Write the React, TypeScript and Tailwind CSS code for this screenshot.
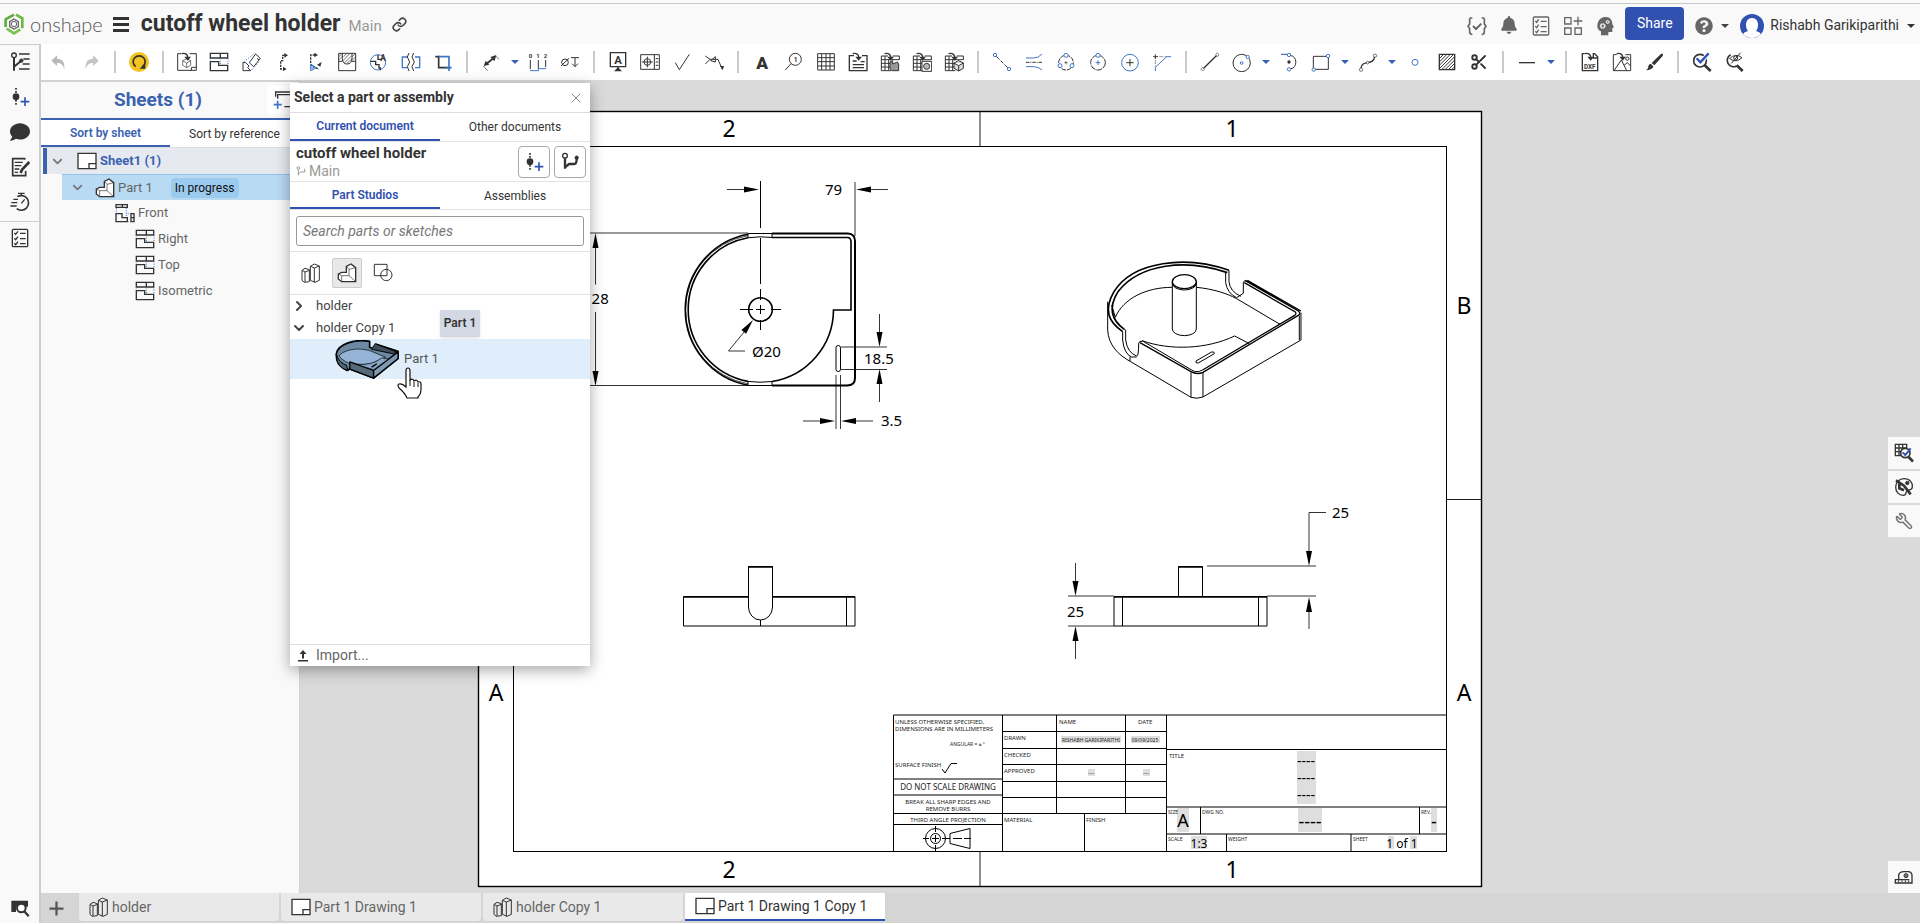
import type { ReactNode } from "react";
import { Scissors, Link, Wrench, ChevronDown, ChevronRight, X } from "lucide-react";
import { FaBell, FaComment, FaQuestionCircle } from "react-icons/fa";

/* 60 unit grid, drawn at 20px, so a stroke of 3 is one pixel */
function Glyph({ children, className = "size-5" }: { children: ReactNode; className?: string }) {
  return (
    <svg viewBox="0 0 60 60" className={className} fill="none" stroke="#333" strokeWidth="3" aria-hidden="true">
      {children}
    </svg>
  );
}

const BLUE = "#3f76c6";

/* ---------- shared glyphs ---------- */

const ViewGlyph = () => (
  <Glyph>
    <path d="M4 4H56V18H4ZM34 4V18M4 29H29V40H56V56H4Z" strokeWidth="4" />
    <path d="M4 19V28M34 19V36M57 19V38" stroke={BLUE} strokeDasharray="3 4" />
  </Glyph>
);

const FrontViewGlyph = () => (
  <Glyph>
    <path d="M3 5H37V13H3ZM22 5V13M3 32H21V44H37V56H3ZM48 32H57V56H48ZM48 44H57" strokeWidth="4" />
    <path d="M4 15V31M34 15V40M38 32H48M38 56H48" stroke={BLUE} strokeDasharray="3 4" />
  </Glyph>
);

const SheetGlyph = () => (
  <Glyph>
    <path d="M3 7H57V53H3ZM36 53V38H57" fill="#fff" strokeWidth="4" />
  </Glyph>
);

const PartGlyph = () => (
  <Glyph>
    <path d="M4 33L14 28H28V10L42 3L56 14V56H14L4 48Z" fill="#fff" strokeWidth="4" />
    <path d="M4 33L14 38H36V19L28 10M36 19L56 14M36 38L56 56M14 38V56" strokeWidth="2" />
  </Glyph>
);

const StudioGlyph = () => (
  <Glyph>
    <path d="M3 22L12 16L25 20V56L10 58L3 52ZM3 22L12 27V57M12 27L25 22" />
    <path d="M28 10L40 3L55 9V52L42 58L28 52ZM28 10L40 15V58M40 15L55 9" />
  </Glyph>
);

const VersionGlyph = () => (
  <Glyph>
    <path d="M18 3V56" strokeDasharray="5 4" strokeWidth="5" />
    <circle cx="18" cy="29" r="10" fill="#333" stroke="none" />
    <path d="M45 31V57M32 44H58" stroke="#2f52b3" strokeWidth="5" />
  </Glyph>
);

const BranchGlyph = () => (
  <Glyph>
    <circle cx="15" cy="11" r="7" strokeWidth="4" />
    <path d="M15 19V50M15 46L27 36H44Q50 34 50 20" strokeWidth="7" />
    <circle cx="50" cy="17" r="5" fill="#333" />
  </Glyph>
);

const InsertArrow = () => (
  <>
    <path d="M14 5C26 2 32 8 32 16" strokeWidth="4" />
    <path d="M22 14H42L32 26Z" fill="#333" stroke="none" />
  </>
);

const HalfGrid = () => <path d="M24 12H4V56H34M4 23H58M4 34H32M4 45H30M15 12V56M26 22V56M38 12H58V24" />;

/* ---------- toolbar ---------- */

type Tool = { label: string; icon: ReactNode; caret?: boolean };

const toolGroups: Tool[][] = [
  [
    {
      label: "Undo",
      icon: (
        <Glyph>
          <path d="M7 26L24 10V20C40 20 48 30 46 52C42 38 36 33 24 33V42Z" fill="#b9b9b9" stroke="none" />
        </Glyph>
      ),
    },
    {
      label: "Redo",
      icon: (
        <Glyph>
          <path d="M53 26L36 10V20C20 20 12 30 14 52C18 38 24 33 36 33V42Z" fill="#c4c4c4" stroke="none" />
        </Glyph>
      ),
    },
  ],
  [
    {
      label: "Update",
      icon: (
        <Glyph>
          <circle cx="30" cy="30" r="30" fill="#f4c321" stroke="none" />
          <path d="M20 44A18 18 0 1 1 41 44" strokeWidth="5" />
          <path d="M49 32V50H32Z" fill="#333" stroke="none" />
        </Glyph>
      ),
    },
  ],
  [
    {
      label: "Insert view",
      icon: (
        <Glyph>
          <path d="M13 5H2V55H58V5H38M43 55V46H58" />
          <path d="M29 20L41 26V40L29 47L17 40V26ZM17 26L29 33L41 26M29 33V47" strokeWidth="2" />
          <InsertArrow />
        </Glyph>
      ),
    },
    { label: "Projected view", icon: <ViewGlyph /> },
    {
      label: "Auxiliary view",
      icon: (
        <Glyph>
          <path d="M44 6L58 19L38 44L25 32ZM48 19L54 24M6 31V56H29L20 47L24 42L14 32Z" />
          <path d="M10 28L40 5M32 54L54 30" stroke={BLUE} strokeDasharray="3 4" />
        </Glyph>
      ),
    },
    {
      label: "Section line",
      icon: (
        <Glyph>
          <path d="M35 10H29V26H23V51H32" strokeDasharray="7 3" strokeWidth="4" />
          <path d="M34 3L45 10L34 17ZM30 44L41 51L30 58Z" fill="#333" stroke="none" />
        </Glyph>
      ),
    },
    {
      label: "Aligned section",
      icon: (
        <Glyph>
          <path d="M30 9H17V38L42 52" strokeDasharray="7 3" strokeWidth="4" />
          <path d="M28 2L39 9L28 16ZM50 30L46 44L36 38Z" fill="#333" stroke="none" />
          <path d="M17 36V56L34 48ZM21 40V52M26 43V50" stroke={BLUE} />
        </Glyph>
      ),
    },
    {
      label: "Broken-out section",
      icon: (
        <Glyph>
          <path d="M5 4H56V56H5ZM5 28H16M45 28H56M16 5V20Q17 36 30 36Q44 36 45 20V5" />
          <path d="M5 14L15 5M5 24L16 13M20 14L28 5M18 26L38 5M22 33L44 11M30 34L45 20M46 14L55 5M46 25L56 14" strokeWidth="2" />
        </Glyph>
      ),
    },
    {
      label: "Detail view",
      icon: (
        <Glyph>
          <circle cx="27" cy="31" r="23" stroke={BLUE} />
          <path d="M4 28H20V38H30V48H34V55M27 9V22H36" strokeWidth="4" />
          <text x="34" y="26" fontSize="25" fontWeight="700" fill="#333" stroke="none" fontFamily="Roboto">A</text>
        </Glyph>
      ),
    },
    {
      label: "Break view",
      icon: (
        <Glyph>
          <path d="M18 15H4V47H18M42 15H56V47H42" stroke={BLUE} strokeWidth="4" />
          <path d="M24 3L19 15L26 30L19 44L24 57M38 3L33 15L40 30L33 44L38 57" />
        </Glyph>
      ),
    },
    {
      label: "Crop view",
      icon: (
        <Glyph>
          <path d="M7 14H20M17 12V47H52" strokeWidth="5" />
          <path d="M17 14H48V57M38 47H56" stroke={BLUE} strokeWidth="5" />
        </Glyph>
      ),
    },
  ],
  [
    {
      label: "Dimension",
      caret: true,
      icon: (
        <Glyph>
          <path d="M16 36L38 18" strokeWidth="5" />
          <path d="M8 42L14 26L25 38ZM46 10L40 28L28 15Z" fill="#333" stroke="none" />
          <path d="M7 42L20 56M40 8L54 22" strokeWidth="2" />
        </Glyph>
      ),
    },
    {
      label: "Ordinate dimension",
      icon: (
        <Glyph>
          <text x="2" y="17" fontSize="18" fontWeight="700" fill="#333" stroke="none" fontFamily="Roboto">0</text>
          <text x="25" y="17" fontSize="18" fontWeight="700" fill="#333" stroke="none" fontFamily="Roboto">1</text>
          <text x="47" y="17" fontSize="18" fontWeight="700" fill="#333" stroke="none" fontFamily="Roboto">2</text>
          <path d="M7 24V51M31 24V50M53 24V45" />
          <path d="M6 56H31V50H55" stroke={BLUE} />
        </Glyph>
      ),
    },
    {
      label: "Hole callout",
      icon: (
        <Glyph>
          <circle cx="15" cy="31" r="10" />
          <path d="M3 42L27 19M33 17H57M45 17V44M36 35L45 44L54 35" />
        </Glyph>
      ),
    },
  ],
  [
    {
      label: "Note",
      icon: (
        <Glyph>
          <path d="M7 2H53V44H7ZM30 44V54" strokeWidth="4" />
          <path d="M30 46L42 58H18Z" fill="#333" stroke="none" />
          <text x="19" y="36" fontSize="34" fontWeight="700" fill="#333" stroke="none" fontFamily="Roboto">A</text>
        </Glyph>
      ),
    },
    {
      label: "Geometric tolerance",
      icon: (
        <Glyph>
          <path d="M2 8H58V52H2ZM43 8V52M6 30H38M22 14V46M47 20H55M47 30H55M47 40H55" />
          <circle cx="22" cy="30" r="10" />
        </Glyph>
      ),
    },
    {
      label: "Surface finish",
      icon: (
        <Glyph>
          <path d="M10 32L22 53L52 7" />
        </Glyph>
      ),
    },
    {
      label: "Weld symbol",
      icon: (
        <Glyph>
          <path d="M4 12L18 22H42L54 50M4 36L18 22M20 26L34 14V30Z" />
          <path d="M48 42L60 42L56 55Z" fill="#333" stroke="none" />
        </Glyph>
      ),
    },
  ],
  [
    {
      label: "Text",
      icon: (
        <Glyph>
          <text x="13" y="50" fontSize="52" fontWeight="900" fill="#333" stroke="none" fontFamily="Roboto">A</text>
        </Glyph>
      ),
    },
    {
      label: "Callout",
      icon: (
        <Glyph>
          <circle cx="34" cy="22" r="18" />
          <path d="M21 35L4 54" />
          <text x="29" y="29" fontSize="20" fontWeight="700" fill="#333" stroke="none" fontFamily="Roboto">1</text>
        </Glyph>
      ),
    },
    {
      label: "Table",
      icon: (
        <Glyph>
          <path d="M5 5H55V54H5ZM5 17H55M5 29H55M5 42H55M17 5V54M30 5V54M42 5V54" />
        </Glyph>
      ),
    },
    {
      label: "Insert BOM",
      icon: (
        <Glyph>
          <path d="M18 11H4V56H57V11H42" strokeWidth="4" />
          <path d="M14 27H26M14 38H48M14 47H48M38 29H50" strokeWidth="4" />
          <InsertArrow />
        </Glyph>
      ),
    },
    {
      label: "Hole table",
      icon: (
        <Glyph>
          <HalfGrid />
          <path d="M30 30L38 26V36L52 30L56 36V56H36L30 50Z" fill="#999" />
          <InsertArrow />
        </Glyph>
      ),
    },
    {
      label: "Revision table",
      icon: (
        <Glyph>
          <HalfGrid />
          <path d="M30 28H59V58H30Z" fill="#fff" />
          <circle cx="44" cy="43" r="9" fill="#bbb" />
          <InsertArrow />
        </Glyph>
      ),
    },
    {
      label: "Cut list table",
      icon: (
        <Glyph>
          <HalfGrid />
          <path d="M44 26L58 33V49L44 57L30 49V33ZM30 33L44 41L58 33M44 41V57" fill="#ddd" />
          <InsertArrow />
        </Glyph>
      ),
    },
  ],
  [
    {
      label: "Centerline",
      icon: (
        <Glyph>
          <path d="M13 13L47 47" strokeDasharray="10 3 3 3" />
          <circle cx="9" cy="9" r="5" stroke={BLUE} />
          <circle cx="51" cy="51" r="5" stroke={BLUE} />
        </Glyph>
      ),
    },
    {
      label: "Edge centerline",
      icon: (
        <Glyph>
          <path d="M6 31H54" strokeDasharray="10 3 3 3" />
          <path d="M6 18H28Q44 18 54 6M6 44H28Q44 44 54 54" stroke={BLUE} />
        </Glyph>
      ),
    },
    {
      label: "Bolt circle",
      icon: (
        <Glyph>
          <circle cx="30" cy="32" r="22" strokeDasharray="14 3" />
          <path d="M25 32H35M30 27V37" strokeWidth="2" />
          <g stroke={BLUE} fill="#fff">
            <circle cx="30" cy="10" r="6" />
            <circle cx="12" cy="41" r="6" />
            <circle cx="48" cy="41" r="6" />
          </g>
        </Glyph>
      ),
    },
    {
      label: "Centermark circle",
      icon: (
        <Glyph>
          <circle cx="30" cy="32" r="22" strokeDasharray="18 3" />
          <circle cx="30" cy="10" r="6" stroke={BLUE} fill="#fff" />
          <path d="M23 32H37M30 25V39" stroke={BLUE} />
        </Glyph>
      ),
    },
    {
      label: "Centermark",
      icon: (
        <Glyph>
          <circle cx="30" cy="32" r="25" stroke={BLUE} />
          <path d="M19 32H41M30 21V43" />
        </Glyph>
      ),
    },
    {
      label: "Virtual sharp",
      icon: (
        <Glyph>
          <path d="M4 14H18M10 7V21" />
          <path d="M22 14H44M10 24V44" stroke="#999" strokeDasharray="12 4" />
          <path d="M10 57V46L44 14H57" stroke={BLUE} />
        </Glyph>
      ),
    },
  ],
  [
    {
      label: "Line",
      icon: (
        <Glyph>
          <path d="M11 49L49 11" strokeWidth="4" />
          <path d="M8 46L13 52L8 57L3 52ZM52 3L57 8L52 14L47 8Z" fill="#fff" strokeWidth="2" />
        </Glyph>
      ),
    },
    {
      label: "Circle",
      caret: true,
      icon: (
        <Glyph>
          <circle cx="29" cy="33" r="26" />
          <circle cx="29" cy="33" r="4" stroke={BLUE} />
          <circle cx="47" cy="15" r="5" stroke={BLUE} fill="#fff" />
        </Glyph>
      ),
    },
    {
      label: "Arc",
      icon: (
        <Glyph>
          <path d="M34 10A21 21 0 0 1 34 51" />
          <path d="M6 7H26" stroke="#2f52b3" />
          <circle cx="30" cy="30" r="5" fill="#333" stroke="none" />
          <circle cx="30" cy="9" r="5" stroke={BLUE} fill="#fff" />
          <circle cx="30" cy="52" r="5" stroke={BLUE} fill="#fff" />
        </Glyph>
      ),
    },
    {
      label: "Rectangle",
      caret: true,
      icon: (
        <Glyph>
          <path d="M7 13H52V52H7Z" />
          <circle cx="51" cy="12" r="5" stroke={BLUE} fill="#fff" />
          <circle cx="8" cy="53" r="5" stroke={BLUE} fill="#fff" />
        </Glyph>
      ),
    },
    {
      label: "Spline",
      caret: true,
      icon: (
        <Glyph>
          <path d="M9 50C10 34 20 34 28 32C40 30 48 28 50 14" strokeWidth="4" />
          <g fill="#fff" strokeWidth="2">
            <circle cx="9" cy="53" r="5" />
            <circle cx="29" cy="32" r="4" />
            <circle cx="51" cy="11" r="5" />
          </g>
        </Glyph>
      ),
    },
    {
      label: "Point",
      icon: (
        <Glyph>
          <circle cx="30" cy="31" r="9" stroke="#4a72d0" />
        </Glyph>
      ),
    },
    {
      label: "Hatch",
      icon: (
        <Glyph>
          <path d="M7 7H53V53H7Z" strokeWidth="4" />
          <path d="M7 20L20 7M7 30L30 7M7 40L40 7M7 50L50 7M14 53L53 14M24 53L53 24M34 53L53 34M44 53L53 44" />
        </Glyph>
      ),
    },
    { label: "Trim", icon: <Scissors className="size-[18px] text-[#333]" strokeWidth={2.5} /> },
  ],
  [
    {
      label: "Line style",
      caret: true,
      icon: (
        <Glyph>
          <path d="M6 32H54" strokeWidth="4" />
        </Glyph>
      ),
    },
  ],
  [
    {
      label: "Insert DXF",
      icon: (
        <Glyph>
          <path d="M14 5H7V56H53V14L44 5H38M40 5V18H53" strokeWidth="4" />
          <text x="12" y="51" fontSize="19" fontWeight="700" fill="#333" stroke="none" fontFamily="Roboto">DXF</text>
          <InsertArrow />
        </Glyph>
      ),
    },
    {
      label: "Insert image",
      icon: (
        <Glyph>
          <path d="M14 8H4V56H56V8H40M6 56L28 24L44 56M36 40L46 32L56 42" />
          <circle cx="46" cy="20" r="5" />
          <InsertArrow />
        </Glyph>
      ),
    },
    {
      label: "Format painter",
      icon: (
        <Glyph>
          <path d="M55 5Q59 7 56 12L31 40L23 33L50 7Q53 4 55 5ZM20 35L28 43Q26 54 5 55Q14 50 13 42Q15 36 20 35Z" fill="#333" stroke="none" />
        </Glyph>
      ),
    },
  ],
  [
    {
      label: "Show dimensions",
      icon: (
        <Glyph>
          <circle cx="24" cy="26" r="19" strokeWidth="5" />
          <path d="M38 40L56 57" strokeWidth="8" />
          <path d="M14 20L25 32L50 4" stroke="#fff" strokeWidth="13" />
          <path d="M14 19L25 31L50 4" stroke="#2f52b3" strokeWidth="7" />
        </Glyph>
      ),
    },
    {
      label: "Hide dangling",
      icon: (
        <Glyph>
          <path d="M38 42A19 19 0 1 1 20 8" strokeWidth="5" />
          <path d="M38 40L56 57" strokeWidth="8" />
          <path d="M17 20Q34 2 54 17Q36 34 17 20ZM22 34L50 2" />
          <circle cx="35" cy="18" r="6" />
        </Glyph>
      ),
    },
  ],
];

function Caret({ className }: { className: string }) {
  return (
    <svg viewBox="0 0 8 4" className={className} aria-hidden="true">
      <path d="M0 0H8L4 4Z" fill="currentColor" />
    </svg>
  );
}

function Toolbar() {
  return (
    <div className="flex h-9 items-center bg-white pl-[2px]">
      {toolGroups.map((group, i) => (
        <div key={i} className="flex items-center">
          {i > 0 && <div className="mx-[7px] h-[22px] w-[2px] bg-[#cacaca]" />}
          {group.map((tool) => (
            <div key={tool.label} className="flex">
              <button type="button" aria-label={tool.label} className="flex h-8 w-8 items-center justify-center">
                {tool.icon}
              </button>
              {tool.caret && (
                <button type="button" aria-label={tool.label + " options"} className="flex w-[15px] items-center justify-center">
                  <Caret className="h-1 w-2 text-[#3661b5]" />
                </button>
              )}
            </div>
          ))}
        </div>
      ))}
    </div>
  );
}

/* ---------- header ---------- */

function Header() {
  return (
    <header className="flex h-[41px] shrink-0 items-center justify-between border-t border-[#c8c9cc] bg-[#f9f9f9] pr-[5px] pl-1">
      <div className="flex items-center">
        <svg viewBox="0 0 60 66" className="h-[22px] w-5" fill="none" aria-hidden="true">
          <path d="M36 5L55 16V46" stroke="#6cbb45" strokeWidth="8" />
          <path d="M49 49L30 61L8 47" stroke="#7ac24f" strokeWidth="8" />
          <path d="M5 42V19L30 5" stroke="#5fae3c" strokeWidth="8" />
          <path d="M30 18L43 26V41L30 48L17 41V26Z" stroke="#666" strokeWidth="4" />
          <circle cx="30" cy="33" r="8" stroke="#666" strokeWidth="3" />
        </svg>
        <span className="ml-[6px] font-[Lato] text-[20px] leading-6 font-light text-[#555]">onshape</span>
        <button type="button" aria-label="Menu" className="ml-[10px] flex w-4 flex-col gap-[3px]">
          <span className="h-[3px] bg-[#333]" />
          <span className="h-[3px] bg-[#333]" />
          <span className="h-[3px] bg-[#333]" />
        </button>
        <h1 className="ml-3 text-[23px] leading-6 font-bold text-[#333]">cutoff wheel holder</h1>
        <span className="ml-2 pt-1 text-[15px] leading-5 text-[#999]">Main</span>
        <button type="button" aria-label="Copy link" className="ml-[10px]">
          <Link className="size-[15px] text-[#444]" strokeWidth={2.5} />
        </button>
      </div>

      <div className="flex items-center pt-[3px] text-[#666]">
        <div className="flex gap-3 pr-[10px]">
          <button type="button" aria-label="Tasks">
            <Glyph>
              <path d="M16 6H11Q8 6 8 12V24L3 31L8 38V48Q8 55 16 55M44 6H49Q52 6 52 12V24L57 31L52 38V48Q52 55 44 55" stroke="#666" strokeWidth="5" />
              <path d="M18 30L27 39L43 23" stroke="#666" strokeWidth="6" />
            </Glyph>
          </button>
          <button type="button" aria-label="Notifications" className="flex w-5 justify-center">
            <FaBell className="size-[18px]" />
          </button>
          <button type="button" aria-label="Checklist">
            <Glyph>
              <rect x="7" y="3" width="46" height="54" rx="3" stroke="#666" strokeWidth="4" />
              <path d="M13 15L17 19L23 10M13 31L17 35L23 26M13 46L17 50L23 41M29 16H47M29 32H47M29 47H47" stroke="#666" strokeWidth="4" />
            </Glyph>
          </button>
          <button type="button" aria-label="App store">
            <Glyph>
              <path d="M5 5H24V24H5ZM5 36H24V55H5ZM36 36H55V55H36ZM45 2V28M32 15H58" stroke="#666" strokeWidth="4" />
            </Glyph>
          </button>
          <button type="button" aria-label="Learning">
            <Glyph>
              <path d="M18 58V46C6 42 6 30 8 22C12 8 22 3 32 3C46 3 52 14 52 24L57 34L52 36V48H40V58Z" fill="#666" stroke="none" />
              <circle cx="23" cy="30" r="6" stroke="#f9f9f9" strokeDasharray="4 1" strokeWidth="5" />
              <circle cx="38" cy="18" r="4" stroke="#f9f9f9" strokeDasharray="3 1" strokeWidth="4" />
            </Glyph>
          </button>
        </div>
        <button type="button" className="mb-1 h-[33px] w-[59px] rounded bg-[#3151b0] text-[14px] text-white">
          Share
        </button>
        <button type="button" aria-label="Help" className="ml-[11px] flex items-center gap-2">
          <FaQuestionCircle className="size-[18px]" />
          <Caret className="h-1 w-2 text-[#444]" />
        </button>
        <button type="button" className="ml-[11px] flex items-center gap-[6px] text-[14px] text-[#333]">
          <svg viewBox="0 0 24 24" className="size-6" aria-hidden="true">
            <circle cx="12" cy="12" r="12" fill="#3151b0" />
            <path d="M12 4C16 4 18 7 18 11C18 14 17 16 16 17Q20 18 21 20Q17 24 12 24Q7 24 3 20Q4 18 8 17C7 16 6 14 6 11C6 7 8 4 12 4Z" fill="#fff" />
          </svg>
          Rishabh Garikiparithi
          <Caret className="ml-[2px] h-1 w-2" />
        </button>
      </div>
    </header>
  );
}

/* ---------- left rail ---------- */

function Rail() {
  return (
    <nav className="flex w-[41px] shrink-0 flex-col items-center border-t border-r-2 border-[#ccc] bg-[#f9f9f9] pt-[7px] pb-[5px]">
      <div className="flex flex-col gap-[15px]">
        <button type="button" aria-label="Feature tree">
          <Glyph>
            <circle cx="12" cy="10" r="7" strokeWidth="4" />
            <path d="M12 17V56M12 44L32 28" strokeWidth="6" />
            <circle cx="34" cy="26" r="5" fill="#333" />
            <path d="M27 6H59M40 21H59M38 36H59M27 51H59" strokeWidth="5" />
          </Glyph>
        </button>
        <button type="button" aria-label="Versions">
          <VersionGlyph />
        </button>
        <button type="button" aria-label="Comments">
          <FaComment className="size-5 text-[#333]" />
        </button>
        <button type="button" aria-label="Notes">
          <Glyph>
            <path d="M44 8V5H8V56H47V42" strokeWidth="5" />
            <path d="M14 16H38M14 26H34M14 36H28M14 46H24" strokeWidth="4" />
            <path d="M58 15L36 38L32 48" strokeWidth="8" />
          </Glyph>
        </button>
        <button type="button" aria-label="History">
          <Glyph>
            <path d="M22 14A22 22 0 1 1 20 50" strokeWidth="5" />
            <path d="M24 4H44M34 4V12M34 34L44 22M10 22H24M4 32H22M1 42H20" strokeWidth="4" />
          </Glyph>
        </button>
      </div>
      <div className="mt-[9px] mb-[6px] h-px w-full bg-[#ccc]" />
      <button type="button" aria-label="Tasks panel">
        <Glyph>
          <rect x="7" y="4" width="46" height="52" rx="3" strokeWidth="4" />
          <path d="M13 15L17 19L24 10M13 31L17 35L24 26M13 46L17 50L24 41M30 16H47M30 32H47M30 47H47" strokeWidth="4" />
        </Glyph>
      </button>
      <button type="button" aria-label="Search tabs" className="mt-auto">
        <Glyph>
          <path d="M4 8H54V26H4ZM4 26H18V42H4Z" fill="#333" stroke="none" />
          <circle cx="34" cy="30" r="13" fill="#fff" strokeWidth="6" />
          <path d="M43 40L56 55" strokeWidth="7" />
        </Glyph>
      </button>
    </nav>
  );
}

/* ---------- sheets panel ---------- */

function SheetsPanel() {
  return (
    <aside className="flex w-[259px] shrink-0 flex-col border-t-2 border-r border-[#d2d2d2] bg-[#f9f9f9] text-[13px] text-[#666]">
      <div className="flex h-[38px] items-center justify-between border-b-2 border-[#3a62b0] pl-[73px]">
        <h2 className="text-[19px] font-bold text-[#3a62b0]">Sheets (1)</h2>
        <button type="button" aria-label="Add sheet" className="flex h-7 w-8 items-center rounded bg-white pl-[6px]">
          <Glyph>
            <path d="M8 20V6H60M14 26V14H60V50H34" strokeWidth="4" />
            <path d="M14 32V56M2 44H26" stroke={BLUE} strokeWidth="5" />
          </Glyph>
        </button>
      </div>
      <div className="flex border-b border-[#ddd] bg-white text-[12px] text-[#333]">
        <button type="button" className="h-[27px] w-[129px] border-b-2 border-[#3a62b0] font-semibold text-[#3a62b0]">
          Sort by sheet
        </button>
        <button type="button" className="h-[27px] flex-1">
          Sort by reference
        </button>
      </div>
      <ul className="pl-[2px] leading-[26px]">
        <li className="flex h-[26px] items-center border-l-4 border-[#3a62b0] bg-[#e6eaf0] font-bold text-[#3a62b0]">
          <ChevronDown className="mr-[12px] ml-[3px] size-[15px] text-[#777]" strokeWidth={3} />
          <SheetGlyph />
          <span className="ml-[3px]">Sheet1 (1)</span>
        </li>
        <li className="ml-[19px] flex h-[26px] items-center border-t border-[#92c3ea] bg-[#b8daf3]">
          <ChevronDown className="mr-[10px] ml-2 size-[15px] text-[#777]" strokeWidth={3} />
          <PartGlyph />
          <span className="ml-[3px]">Part 1</span>
          <span className="ml-[18px] h-5 rounded bg-[#9ccbf0] px-1 text-[12px] leading-5 text-[#111]">In progress</span>
        </li>
        <li className="flex h-[26px] items-center gap-[3px] pl-[72px]">
          <FrontViewGlyph />
          Front
        </li>
        {["Right", "Top", "Isometric"].map((name) => (
          <li key={name} className="flex h-[26px] items-center gap-[3px] pl-[92px]">
            <ViewGlyph />
            {name}
          </li>
        ))}
      </ul>
    </aside>
  );
}

/* ---------- drawing sheet ---------- */

/* tip at x,y; angle 0 points right */
function Arrow({ x, y, angle }: { x: number; y: number; angle: number }) {
  return <path d="M0 0L-15 3V-3Z" transform={`translate(${x} ${y}) rotate(${angle})`} fill="#000" stroke="none" />;
}

function TopView() {
  return (
    <g>
      {/* wall */}
      <g strokeWidth="1.6">
        <path d="M748 234.2A76.8 76.8 0 0 0 748 385.2M748 237.8A73 73 0 0 0 748 381.4" />
        <path d="M772 233.5H848Q855 234 855 241V378Q855 385.5 847 385.5H772" strokeWidth="2" />
        <path d="M772 237.5H848Q851 238 851 242V310H833.5A73 73 0 0 1 772 381.5" />
      </g>
      <path d="M748 235.6A75.2 75.2 0 0 0 748 383.8" strokeWidth=".7" />
      <path d="M748 233.5H772V237.5Q760 236 748 237.8ZM748 385.5H772V381.5Q760 383 748 381.4Z" fill="#fff" />
      <circle cx="760.5" cy="309.5" r="11.8" strokeWidth="1.6" />
      <rect x="836" y="345.5" width="4.5" height="26" rx="2.2" />
      {/* center mark */}
      <path d="M760.5 181V228M760.5 238V284M760.5 289V300M760.5 305V314M760.5 320V330M740 309.5H753M756 309.5H765M771 309.5H781" />
      {/* dimensions */}
      <g strokeWidth=".8">
        <path d="M855 182V236M727 189.5H750M865 189.5H888" />
        <path d="M480 233H748M480 385.5H748M595.5 240V284.5M595.5 312V380" />
        <path d="M749 326L728.5 351H745" />
        <path d="M841 347H887M841 369.5H887M879.5 314V340M879.5 376V402" />
        <path d="M836 375V429M840.5 375V429M803 421H828M848 421H873" />
      </g>
      <Arrow x={759} y={189.5} angle={0} />
      <Arrow x={856} y={189.5} angle={180} />
      <Arrow x={595.5} y={233} angle={-90} />
      <Arrow x={595.5} y={386} angle={90} />
      <Arrow x={753} y={320} angle={-52} />
      <Arrow x={879.5} y={347} angle={90} />
      <Arrow x={879.5} y={369} angle={-90} />
      <Arrow x={835} y={421} angle={0} />
      <Arrow x={841} y={421} angle={180} />
      <g fill="#000" stroke="none" fontSize="15">
        <text x="825" y="195">79</text>
        <text x="583" y="304">128</text>
        <text x="752" y="357">Ø20</text>
        <text x="864" y="364">18.5</text>
        <text x="881" y="426">3.5</text>
      </g>
    </g>
  );
}

function IsoView() {
  return (
    <g transform="translate(1040 230) scale(.3333)" strokeWidth="3">
      {/* round wall rim */}
      <path d="M567 121C440 76 280 92 222 185C190 240 205 275 248 305M562 128C440 86 300 100 234 185C200 240 220 275 254 299" strokeWidth="5" />
      <path d="M203 215V300C205 345 235 375 272 395L453 502Q471 508 489 501L783 330V248" />
      <path d="M567 121V155Q570 185 603 199M557 127V158Q562 190 590 203L610 190V158Q612 150 620 152" />
      <path d="M248 305V330Q252 370 274 381M257 299V330Q262 368 290 378Q296 380 296 340Q298 332 306 334M270 380V394M274 381H290" />
      {/* straight rim */}
      <path d="M616 152L775 243Q784 250 775 256L489 427Q471 435 453 425L300 338M622 151L783 243M613 158L766 246Q770 252 764 256L488 420" strokeWidth="4" />
      <path d="M306 332L455 420Q470 430 488 420" />
      <path d="M453 427V502M489 427V501M778 257V330" />
      {/* floor */}
      <path d="M226 262C250 205 320 172 396 172M469 172C520 177 560 190 590 206L720 283" />
      <path d="M306 332C390 362 500 358 584 318L628 341M215 225L226 262" />
      <path d="M468 393L515 366Q524 364 523 371L475 399Q466 401 468 393Z" />
      {/* pin */}
      <path d="M397 155V297A36 20 0 0 0 469 297V155" fill="#fff" />
      <ellipse cx="433" cy="155" rx="36" ry="21" fill="#fff" strokeWidth="4" />
      <path d="M397 160A36 20 0 0 0 469 160" />
    </g>
  );
}

function SideViews() {
  return (
    <g>
      <path d="M683.5 596.5H855V626H683.5ZM846.5 597V626M760.5 619V626" />
      <path d="M748.5 566.5H772.5V607A12 13 0 0 1 748.5 607Z" fill="#fff" />
      <path d="M748 567H773M684 597H748M773 597H855" strokeWidth="1.6" />

      <path d="M1114 596.5H1267V626H1114ZM1122.5 597V626M1258.5 597V626M1178.5 596V566.5H1202.5V596" />
      <path d="M1178 567H1203M1114 597H1267" strokeWidth="1.6" />
      <g strokeWidth=".8">
        <path d="M1068 596H1114M1068 626H1114M1075.5 563V590M1075.5 632V659" />
        <path d="M1207 566H1316M1267 596H1316M1309 560V512.5H1326M1309 602V629" />
      </g>
      <Arrow x={1075.5} y={596} angle={90} />
      <Arrow x={1075.5} y={626} angle={-90} />
      <Arrow x={1309} y={566} angle={90} />
      <Arrow x={1309} y={597} angle={-90} />
      <g fill="#000" stroke="none" fontSize="15">
        <text x="1067" y="617">25</text>
        <text x="1332" y="518">25</text>
      </g>
    </g>
  );
}

function TitleBlock() {
  return (
    <g>
      <path d="M893.5 852V715H1447M1002.5 715V852M1056.5 715V814M1125.5 715V814M1166.5 715V852M1084.5 814V852" />
      <path d="M893 779H1002M893 795H1002M893 813.5H1166M893 824.5H1002" />
      <path d="M1002 731.5H1166M1002 748.5H1166M1002 764.5H1166M1002 781.5H1166M1002 797.5H1166" />
      <path d="M1166 749.5H1447M1166 807H1447M1166 834H1447M1200.5 807V834M1419.5 807V834M1226.5 834V852M1351 834V852" />
      {/* surface finish mark and projection symbol */}
      <path d="M942 769L945 773L951 763.5H957" />
      <g>
        <circle cx="935.5" cy="838.5" r="10" />
        <circle cx="935.5" cy="838.5" r="5" />
        <path d="M923 838.5H929M932 838.5H939M942 838.5H950M953 838.5H962M964 838.5H971M935.5 826V832M935.5 835V842M935.5 845V851M950 833.5L970 828.5V848.5L950 843.5Z" />
      </g>
      <g fill="#dedede" stroke="none">
        <rect x="1061" y="736" width="60" height="7" />
        <rect x="1131" y="736" width="29" height="7" />
        <rect x="1088" y="769" width="7" height="7" />
        <rect x="1143" y="769" width="7" height="7" />
        <rect x="1297" y="751" width="19" height="53" />
        <rect x="1177" y="808" width="12" height="24" />
        <rect x="1298" y="808" width="24" height="24" />
        <rect x="1431" y="808" width="6" height="24" />
        <rect x="1191" y="836" width="16" height="13" />
        <rect x="1388" y="836" width="6" height="13" />
        <rect x="1410" y="836" width="7" height="13" />
      </g>
      <g fill="#222" stroke="none" fontSize="6">
        <text x="895" y="724">UNLESS OTHERWISE SPECIFIED,</text>
        <text x="895" y="731">DIMENSIONS ARE IN MILLIMETERS</text>
        <text x="950" y="746" fontSize="5">ANGULAR = ± °</text>
        <text x="895" y="767">SURFACE FINISH</text>
        <text x="948" y="790" fontSize="8" textAnchor="middle">DO NOT SCALE DRAWING</text>
        <text x="948" y="804" textAnchor="middle">BREAK ALL SHARP EDGES AND</text>
        <text x="948" y="811" textAnchor="middle">REMOVE BURRS</text>
        <text x="948" y="822" textAnchor="middle">THIRD ANGLE PROJECTION</text>
        <text x="1059" y="724">NAME</text>
        <text x="1138" y="724">DATE</text>
        <text x="1004" y="740">DRAWN</text>
        <text x="1004" y="757">CHECKED</text>
        <text x="1004" y="773">APPROVED</text>
        <text x="1004" y="822">MATERIAL</text>
        <text x="1086" y="822">FINISH</text>
        <text x="1169" y="758">TITLE</text>
        <text x="1091" y="742" fontSize="5" textAnchor="middle">RISHABH GARIKIPARITHI</text>
        <text x="1145" y="742" fontSize="5" textAnchor="middle">09/09/2025</text>
        <text x="1091" y="775" textAnchor="middle">---</text>
        <text x="1146" y="775" textAnchor="middle">---</text>
        <text x="1168" y="814" fontSize="5">SIZE</text>
        <text x="1202" y="814" fontSize="5">DWG NO.</text>
        <text x="1421" y="814" fontSize="5">REV.</text>
        <text x="1168" y="841" fontSize="5">SCALE</text>
        <text x="1228" y="841" fontSize="5">WEIGHT</text>
        <text x="1353" y="841" fontSize="5">SHEET</text>
      </g>
      <g fill="#000" stroke="none" textAnchor="middle">
        <text x="1306" y="766" fontSize="14">----</text>
        <text x="1306" y="783" fontSize="14">----</text>
        <text x="1306" y="800" fontSize="14">----</text>
        <text x="1183" y="827" fontSize="18">A</text>
        <text x="1310" y="828" fontSize="18">----</text>
        <text x="1434" y="828" fontSize="18">-</text>
        <text x="1199" y="848" fontSize="12">1:3</text>
        <text x="1402" y="848" fontSize="12">1 of 1</text>
      </g>
    </g>
  );
}

function Drawing() {
  return (
    <svg
      viewBox="300 80 1620 813"
      preserveAspectRatio="xMinYMin meet"
      className="block h-full w-full"
      fill="none"
      stroke="#000"
      strokeWidth="1"
      fontFamily="'Noto Sans', sans-serif"
    >
      <rect x="478.5" y="111.5" width="1003" height="775" fill="#fff" strokeWidth="1.4" />
      <rect x="513.5" y="146.5" width="933" height="705" />
      <path d="M980 112V146M980 852V886M1447 499.5H1482M478 499.5H513" strokeWidth=".9" />
      <g fill="#000" stroke="none" fontSize="23" textAnchor="middle">
        <text x="729" y="137">2</text>
        <text x="1232" y="137">1</text>
        <text x="729" y="878">2</text>
        <text x="1232" y="878">1</text>
        <text x="496" y="701">A</text>
        <text x="1464" y="701">A</text>
        <text x="1464" y="314">B</text>
      </g>
      <TopView />
      <IsoView />
      <SideViews />
      <TitleBlock />
    </svg>
  );
}

/* ---------- insert dialog ---------- */

function PartThumb() {
  return (
    <svg viewBox="0 0 192 118" className="h-[39px] w-16" stroke="#000" strokeWidth="5" strokeLinejoin="round" aria-hidden="true">
      <path d="M3 42C8 12 60 -4 104 4V22L112 26L122 12L190 34V56L116 115L44 88L36 92C10 80 2 66 3 42Z" fill="#6d8aa5" />
      <path d="M12 46C40 22 80 26 104 32L152 52L130 62Q110 76 84 74L44 72C34 66 14 58 12 46Z" fill="#94b3d6" strokeWidth="2" />
      <path d="M44 66L116 92V115L44 88Z" fill="#56697b" strokeWidth="4" />
      <path d="M116 92L190 36V56L116 115Z" fill="#7f9ab5" strokeWidth="4" />
      <path d="M4 44C8 62 22 72 34 76L38 92C12 84 4 70 4 44Z" fill="#4f6272" strokeWidth="3" />
      <path d="M84 74Q120 72 140 54L160 58L116 90L66 74Z" fill="#89a7c6" strokeWidth="2" />
      <path d="M110 82L126 72" strokeWidth="4" />
      <path d="M122 12L186 36L176 42L110 28" fill="#3f4f5e" strokeWidth="3" />
    </svg>
  );
}

function HandCursor() {
  return (
    <svg viewBox="0 0 26 34" className="pointer-events-none absolute top-[283px] left-[106px] h-[34px] w-[26px]" aria-hidden="true">
      <path
        d="M12 2Q14 2 14 5V14Q17 12 18 15Q21 13 22 16Q25 15 25 18V24Q25 28 22 31V32H11Q9 27 3 22Q1 19 3 18Q6 17 10 21V5Q10 2 12 2Z"
        fill="#fff"
        stroke="#111"
        strokeWidth="1.2"
      />
      <path d="M14 14V20M18 16V21M22 17V21" stroke="#111" />
    </svg>
  );
}

function InsertDialog() {
  return (
    <section
      role="dialog"
      aria-label="Select a part or assembly"
      className="absolute top-[3px] left-[249px] z-10 flex h-[583px] w-[300px] flex-col bg-white text-[13px] text-[#333] shadow-[0_4px_14px_rgba(0,0,0,0.35)]"
    >
      <div className="flex h-[30px] shrink-0 items-center justify-between border-b border-[#ddd] pr-[6px] pl-1">
        <h2 className="text-[14px] font-bold">Select a part or assembly</h2>
        <button type="button" aria-label="Close">
          <X className="size-4 text-[#888]" strokeWidth={1.5} />
        </button>
      </div>
      <div className="flex h-[29px] shrink-0 border-b border-[#e4e4e4] text-[12px]">
        <button type="button" className="flex-1 border-b-2 border-[#3151b0] font-semibold text-[#3151b0]">Current document</button>
        <button type="button" className="flex-1">Other documents</button>
      </div>
      <div className="flex h-[40px] shrink-0 items-center justify-between border-b border-[#e4e4e4] pr-1 pl-[6px]">
        <div>
          <div className="text-[15px] leading-[18px] font-bold">cutoff wheel holder</div>
          <div className="flex items-center gap-[3px] text-[14px] leading-[18px] text-[#999]">
            <svg viewBox="0 0 30 30" className="size-[10px]" fill="none" stroke="#999" strokeWidth="3" aria-hidden="true">
              <circle cx="7" cy="6" r="4" />
              <path d="M7 11V28M7 24L14 18H26V8" />
            </svg>
            Main
          </div>
        </div>
        <div className="flex gap-1">
          <button type="button" aria-label="Select version" className="flex size-8 items-center justify-center rounded border border-[#aaa]">
            <VersionGlyph />
          </button>
          <button type="button" aria-label="Select branch" className="flex size-8 items-center justify-center rounded border border-[#aaa]">
            <BranchGlyph />
          </button>
        </div>
      </div>
      <div className="flex h-[28px] shrink-0 border-b border-[#e4e4e4] text-[12px]">
        <button type="button" className="flex-1 border-b-2 border-[#3151b0] font-semibold text-[#3151b0]">Part Studios</button>
        <button type="button" className="flex-1">Assemblies</button>
      </div>
      <div className="border-b border-[#e4e4e4] px-[6px] pt-[6px] pb-[5px]">
        <input
          type="text"
          aria-label="Search parts or sketches"
          placeholder="Search parts or sketches"
          className="h-[30px] w-full rounded-[3px] border border-[#999] px-[6px] text-[14px] placeholder:text-[#777] placeholder:italic"
        />
      </div>
      <div className="flex h-[43px] shrink-0 items-center gap-[6px] border-b border-[#e4e4e4] pl-[6px]">
        <button type="button" aria-label="Part studios" className="flex size-[30px] items-center justify-center">
          <StudioGlyph />
        </button>
        <button type="button" aria-label="Parts" className="flex size-[30px] items-center justify-center rounded-[2px] border border-[#ccc] bg-[#e8e8e8]">
          <PartGlyph />
        </button>
        <button type="button" aria-label="Sketches" className="flex size-[30px] items-center justify-center">
          <Glyph>
            <path d="M4 4H42V38H4Z" />
            <circle cx="40" cy="36" r="17" />
          </Glyph>
        </button>
      </div>
      <ul className="flex-1 text-[#444]">
        <li className="flex h-[22px] items-center">
          <ChevronRight className="mr-[9px] ml-[1px] size-4" strokeWidth={3} />
          holder
        </li>
        <li className="flex h-[22px] items-center">
          <ChevronDown className="mr-[9px] ml-[1px] size-4" strokeWidth={3} />
          holder Copy 1
        </li>
        <li className="flex h-10 items-center bg-[#dfeefa] pl-[45px] text-[#555]">
          <PartThumb />
          <span className="ml-[5px]">Part 1</span>
        </li>
      </ul>
      <button type="button" className="flex h-[22px] shrink-0 items-center gap-2 border-t border-[#ddd] pl-2 text-[14px] text-[#666]">
        <svg viewBox="0 0 10 12" className="h-3 w-[10px]" aria-hidden="true">
          <path d="M5 0L8.500 4H6V8.500H4V4H1.500ZM0 10H10V11.500H0Z" fill="#333" />
        </svg>
        Import...
      </button>
      <div role="tooltip" className="absolute top-[227px] left-[150px] h-[27px] w-10 bg-[#d3d9e4] text-center text-[12px] leading-[27px] font-semibold whitespace-nowrap shadow">
        Part 1
      </div>
      <HandCursor />
    </section>
  );
}

/* ---------- canvas side buttons ---------- */

function SideButtons() {
  const button = "flex h-8 w-8 items-center justify-center bg-[#f9f9f9]";
  return (
    <>
      <div className="absolute top-[357px] right-0 flex flex-col gap-[2px]">
        <button type="button" aria-label="Drawing properties" className={button}>
          <Glyph>
            <path d="M4 4H38V38H4ZM4 15H38M4 26H38M15 4V38M26 4V38" strokeWidth="4" />
            <circle cx="34" cy="30" r="14" fill="#fff" strokeWidth="5" />
            <path d="M44 42L57 56" strokeWidth="8" />
            <path d="M26 28L34 36L50 16" stroke="#2f52b3" strokeWidth="6" />
          </Glyph>
        </button>
        <button type="button" aria-label="Appearance" className={button}>
          <Glyph>
            <path d="M30 5C48 5 57 18 55 30C54 42 42 38 38 42C34 48 38 55 28 55C14 55 5 44 5 30C5 16 16 5 30 5Z" strokeWidth="4" />
            <path d="M6 10L30 26L50 52M16 20V34L30 40" strokeWidth="8" />
            <circle cx="40" cy="18" r="5" fill="#333" />
          </Glyph>
        </button>
        <button type="button" aria-label="Tools" className={button}>
          <Wrench className="size-[18px] -scale-x-100 text-[#777]" strokeWidth={2} />
        </button>
      </div>
      <button type="button" aria-label="Measure" className="absolute right-0 bottom-0 flex h-8 w-8 items-center justify-center bg-[#f9f9f9]">
        <Glyph>
          <path d="M14 36V24Q16 14 30 14H44Q54 16 54 26V48H4V38H46" strokeWidth="4" />
          <path d="M14 40V46M24 40V46M34 40V46M44 40V46" />
          <circle cx="36" cy="26" r="6" fill="#777" />
        </Glyph>
      </button>
    </>
  );
}

/* ---------- bottom tabs ---------- */

const tabs = [
  { name: "holder", icon: <StudioGlyph /> },
  { name: "Part 1 Drawing 1", icon: <SheetGlyph /> },
  { name: "holder Copy 1", icon: <StudioGlyph /> },
  { name: "Part 1 Drawing 1 Copy 1", icon: <SheetGlyph />, active: true },
];

function TabBar() {
  return (
    <div className="flex h-[30px] shrink-0 bg-[#d5d5d5] text-[14px]">
      <button type="button" aria-label="Add tab" className="flex w-[38px] items-center justify-center pr-2">
        <Glyph className="size-[15px]">
          <path d="M30 2V58M2 30H58" stroke="#555" strokeWidth="9" />
        </Glyph>
      </button>
      <div className="flex gap-[2px]">
        {tabs.map((tab) => (
          <button
            key={tab.name}
            type="button"
            className={
              tab.active
                ? "flex h-7 w-[200px] items-center gap-[3px] border-b-2 border-[#3151b0] bg-white pl-[10px] text-[#333]"
                : "flex h-7 w-[200px] items-center gap-[3px] rounded-b bg-[#e9e9e9] pl-[10px] text-[#666]"
            }
          >
            {tab.icon}
            {tab.name}
          </button>
        ))}
      </div>
    </div>
  );
}

export default function App() {
  return (
    <div className="flex h-screen flex-col overflow-hidden bg-[#f9f9f9] pt-[3px] font-[Roboto,sans-serif]">
      <Header />
      <div className="flex min-h-0 flex-1">
        <Rail />
        <div className="flex min-w-0 flex-1 flex-col">
          <Toolbar />
          <div className="relative flex min-h-0 flex-1">
            <SheetsPanel />
            <main className="relative min-w-0 flex-1 bg-[#dadada]">
              <Drawing />
              <SideButtons />
            </main>
            <InsertDialog />
          </div>
          <TabBar />
        </div>
      </div>
    </div>
  );
}
